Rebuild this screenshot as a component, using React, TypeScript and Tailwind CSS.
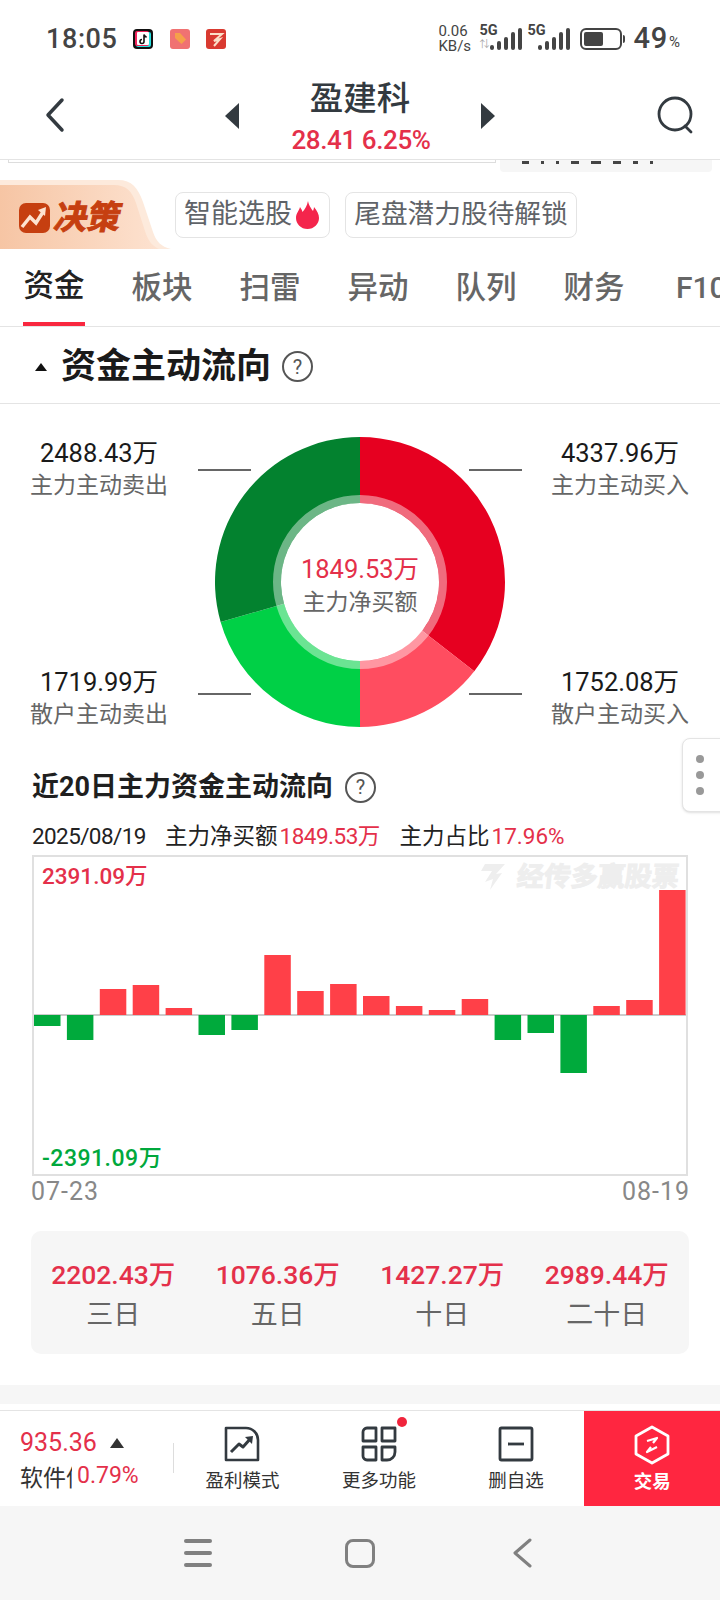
import React from 'react';

const polar = (r: number, deg: number) => {
    const a = ((deg - 90) * Math.PI) / 180;
    return [162 + r * Math.cos(a), 145 + r * Math.sin(a)];
};

const arc = (r0: number, r1: number, from: number, to: number) => {
    const [ax, ay] = polar(r1, from);
    const [bx, by] = polar(r1, to);
    const [cx, cy] = polar(r0, to);
    const [dx, dy] = polar(r0, from);
    const large = to - from > 180 ? 1 : 0;
    return `M${ax} ${ay}A${r1} ${r1} 0 ${large} 1 ${bx} ${by}L${cx} ${cy}A${r0} ${r0} 0 ${large} 0 ${dx} ${dy}Z`;
};

const slices = [
    { from: 0, to: 128, color: '#e60020' },
    { from: 128, to: 180, color: '#ff4d60' },
    { from: 180, to: 254, color: '#00d046' },
    { from: 254, to: 360, color: '#03822f' },
];

const bars = [-11, -25, 26, 30, 7, -20, -15, 60, 24, 31, 19, 9, 5, 16, -25, -18, -58, 9, 15, 125];

const tabs = ['资金', '板块', '扫雷', '异动', '队列', '财务'];

const periods = [
    { value: '2202.43万', label: '三日' },
    { value: '1076.36万', label: '五日' },
    { value: '1427.27万', label: '十日' },
    { value: '2989.44万', label: '二十日' },
];

const Signal: React.FC = () => (
    <svg width="34" height="24" viewBox="0 0 34 24" fill="#444">
        <rect x="1" y="18" width="4" height="5" rx="2" />
        <rect x="8" y="14" width="4" height="9" rx="2" />
        <rect x="15" y="10" width="4" height="13" rx="2" />
        <rect x="22" y="5" width="4" height="18" rx="2" />
        <rect x="29" y="1" width="4" height="22" rx="2" />
    </svg>
);

const Help: React.FC = () => (
    <span className="flex h-[31px] w-[31px] items-center justify-center rounded-full border-2 border-[#555] text-[20px] leading-none text-[#555]">?</span>
);

const Label: React.FC<{ value: string; label: string }> = ({ value, label }) => (
    <div className="flex flex-col items-center">
        <span className="h-[34px] text-[25.5px] leading-[34px] text-[#1a1a1a]">{value}</span>
        <span className="h-[32px] text-[23px] leading-[32px] text-[#666]">{label}</span>
    </div>
);

const BarItem: React.FC<{ label: string; icon: React.ReactNode; dot?: boolean }> = ({ label, icon, dot }) => (
    <div className="flex flex-col items-center pt-[15px]">
        <div className="relative">
            {icon}
            {dot && <span className="absolute right-[-10px] top-[-9px] h-[10px] w-[10px] rounded-full bg-[#f0243c]" />}
        </div>
        <span className="mt-[6px] text-[18.5px] leading-[26px] text-[#333]">{label}</span>
    </div>
);

export default function App() {
    return (
        <div className="relative flex h-[1600px] w-[720px] flex-col overflow-hidden bg-white [font-family:Roboto,'Noto_Sans_CJK_SC',sans-serif]">
            {/* status bar */}
            <div className="flex h-[78px] items-center justify-between pl-[46px] pr-[40px]">
                <div className="flex items-center">
                    <span className="w-[87px] text-[27px] font-medium tracking-[0.6px] text-[#444]">18:05</span>
                    <svg width="20" height="20" viewBox="0 0 20 20">
                        <rect width="20" height="20" rx="4" fill="#111" />
                        <rect x="3" y="3" width="15" height="15" rx="2" fill="#25e0e0" />
                        <rect x="2" y="2" width="14" height="15" rx="2" fill="#f0245c" />
                        <rect x="4" y="3" width="12" height="13" rx="1" fill="#fff" />
                        <path d="M11 5.500v7a2 2 0 1 1-2-2M11 5.500c.3 1.500 1.300 2.400 2.700 2.500" fill="none" stroke="#111" strokeWidth="1.600" />
                    </svg>
                    <svg className="ml-[17px]" width="20" height="20" viewBox="0 0 20 20">
                        <rect width="20" height="20" rx="3" fill="#f07272" />
                        <path d="M5 4h5l6 6.500-4.500 4.500L5 9z" fill="#f5a04a" />
                    </svg>
                    <svg className="ml-[16px]" width="20" height="20" viewBox="0 0 20 20">
                        <rect width="20" height="20" rx="3" fill="#d93a30" />
                        <path d="M4 5h12L8 12l6-2-6 7" fill="none" stroke="#fbe0c8" strokeWidth="2" />
                    </svg>
                </div>
                <div className="flex items-center text-[#444]">
                    <div className="flex w-[41px] flex-col text-[15px] leading-[15px]">
                        <span>0.06</span>
                        <span>KB/s</span>
                    </div>
                    <div className="relative h-[24px] w-[44px]">
                        <span className="absolute left-0 top-[-4px] text-[14.5px] font-bold leading-[16px]">5G</span>
                        <span className="absolute left-0 top-[13px] text-[10px] leading-[10px] text-[#aaa]">⇅</span>
                        <div className="absolute right-0 top-0"><Signal /></div>
                    </div>
                    <div className="relative ml-[4px] h-[24px] w-[44px]">
                        <span className="absolute left-0 top-[-4px] text-[14.5px] font-bold leading-[16px]">5G</span>
                        <div className="absolute right-0 top-0"><Signal /></div>
                    </div>
                    <div className="ml-[9px] flex h-[22px] w-[42px] items-center rounded-[6px] border-2 border-[#444] p-[2px]">
                        <div className="h-full w-[19px] rounded-[2px] bg-[#444]" />
                    </div>
                    <div className="ml-[1px] h-[8px] w-[2px] rounded-r bg-[#444]" />
                    <span className="ml-[8px] text-[29px] font-medium tracking-[0.8px]">49</span>
                    <span className="ml-[1px] mt-[6px] text-[15px]">%</span>
                </div>
            </div>

            {/* title */}
            <div className="grid h-[82px] grid-cols-[1fr_270px_1fr] items-center border-b border-[#e4e4e4]">
                <div className="pb-[8px] pl-[44px]">
                    <svg width="22" height="36" viewBox="0 0 22 36" fill="none" stroke="#333a40" strokeWidth="3.500" strokeLinecap="round" strokeLinejoin="round">
                        <path d="M18 3 4 18l14 15" />
                    </svg>
                </div>
                <div className="flex items-start justify-between">
                    <div className="mt-[20px] h-0 w-0 border-y-[13px] border-r-[14px] border-y-transparent border-r-[#333a40]" />
                    <div className="-mt-[3px] flex flex-col items-center">
                        <span className="text-[33.5px] font-medium leading-[38px] text-[#333a40]">盈建科</span>
                        <span className="ml-[2px] mt-[7px] text-[26px] font-medium leading-[30px] tracking-[-0.4px] text-[#e4304a]">28.41 6.25%</span>
                    </div>
                    <div className="mt-[20px] h-0 w-0 border-y-[13px] border-l-[14px] border-y-transparent border-l-[#333a40]" />
                </div>
                <div className="flex justify-end pb-[8px] pr-[23px]">
                    <svg width="42" height="40" viewBox="0 0 42 40" fill="none" stroke="#333a40" strokeWidth="2.800" strokeLinecap="round">
                        <circle cx="20" cy="19" r="16" />
                        <path d="m30 31 6 6" />
                    </svg>
                </div>
            </div>

            {/* clipped row */}
            <div className="flex h-[12px] items-start pl-[8px] pr-[8px]">
                <div className="h-[3px] w-[488px] border-x border-b border-[#ddd]" />
                <div className="ml-[4px] flex h-[12px] flex-1 items-start gap-[12px] rounded-b-[4px] bg-[#f6f6f6] pl-[22px] pt-[1px]">
                    {[7, 3, 3, 8, 10, 8, 5, 3].map((w, i) => (
                        <span key={i} className="h-[3px] bg-[#444]" style={{ width: w }} />
                    ))}
                </div>
            </div>

            {/* banner */}
            <div className="mt-[8px] flex h-[69px] items-center">
                <div className="relative h-[69px] w-[175px] shrink-0">
                    <svg className="absolute inset-0" width="175" height="69" viewBox="0 0 175 69">
                        <defs>
                            <linearGradient id="peach" x1="0" x2="1" y1="0" y2="0">
                                <stop offset="0" stopColor="#f6c5a4" />
                                <stop offset="1" stopColor="#fde2d0" />
                            </linearGradient>
                        </defs>
                        <path d="M0 0h118c14 0 20 8 25 22l10 30c3 9 8 15 18 17H0z" fill="#fdeadc" />
                        <path d="M0 5h114c12 0 18 6 22 18l9 28c3 9 6 14 14 18H0z" fill="url(#peach)" />
                    </svg>
                    <div className="absolute left-[19px] top-[23px] flex items-center gap-[5px]">
                        <svg width="31" height="30" viewBox="0 0 31 30">
                            <path d="M7 0h17a7 7 0 0 1 7 7v16a7 7 0 0 1-7 7H7a7 7 0 0 1-7-7V7a7 7 0 0 1 7-7z" fill="#c63f10" />
                            <path d="M3 24 11 14l6 6 7-11" fill="none" stroke="#fde2d0" strokeWidth="3.500" />
                            <path d="m19 7 8-3-1 9z" fill="#fde2d0" />
                        </svg>
                        <span className="-skew-x-12 text-[33px] font-bold leading-[30px] text-[#c63f10] [-webkit-text-stroke:1px_#c63f10]">决策</span>
                    </div>
                </div>
                <div className="flex h-[46px] w-[155px] items-center gap-[4px] rounded-[8px] border border-[#e4e4e4] pl-[8px] text-[27px] text-[#5f6368]">
                    <span>智能选股</span>
                    <svg width="23" height="28" viewBox="0 0 23 28" fill="#f4254c">
                        <path d="M12 0c1 5 3 7 5 10 .5-1.500 1-2.500 1-4 3 4 5 7 5 11 0 6-5 11-11.500 11S0 23 0 17c0-5 3-7 4-11 1 1.500 2 3 2.500 5C9 8 11 5 12 0z" />
                    </svg>
                </div>
                <div className="ml-[15px] flex h-[46px] w-[232px] items-center justify-center rounded-[8px] border border-[#e4e4e4] text-[26.7px] text-[#5f6368]">尾盘潜力股待解锁</div>
            </div>

            {/* tabs */}
            <div className="flex h-[78px] border-b border-[#e4e4e4] pl-[23px]">
                {tabs.map((t, i) => (
                    <div key={t} className={`flex h-[77px] w-[108px] shrink-0 items-start ${i === 0 ? 'text-[#222]' : 'text-[#666]'}`}>
                        <div className={`flex h-[77px] w-[62px] items-center justify-center text-[30.5px] font-medium ${i === 0 ? 'border-b-4 border-[#f9273f]' : ''}`}>{t}</div>
                    </div>
                ))}
                <div className="flex h-[77px] shrink-0 items-center pl-[5px] text-[30px] font-medium text-[#666]">F10</div>
            </div>

            {/* section title */}
            <div className="flex h-[77px] items-center border-b border-[#e4e4e4] pl-[35px] pt-[3px]">
                <div className="h-0 w-0 border-x-[6px] border-b-[8px] border-x-transparent border-b-[#111]" />
                <span className="ml-[14px] text-[35px] font-bold leading-none text-[#1a1a1a]">资金主动流向</span>
                <span className="ml-[11px]"><Help /></span>
            </div>

            {/* donut */}
            <div className="flex h-[327px] pt-[32px]">
                <div className="flex h-[295px] w-[198px] flex-col justify-between">
                    <Label value="2488.43万" label="主力主动卖出" />
                    <Label value="1719.99万" label="散户主动卖出" />
                </div>
                <div className="relative mt-px h-[290px] w-[324px]">
                    <svg width="324" height="290" viewBox="0 0 324 290">
                        {slices.map(s => (
                            <path key={s.from} d={arc(79, 145, s.from, s.to)} fill={s.color} />
                        ))}
                        <circle cx="162" cy="145" r="83" fill="none" stroke="#fff" strokeOpacity="0.42" strokeWidth="8" />
                        <path d="M-1 33h54M271 33h54M-1 257h54M271 257h54" stroke="#666" strokeWidth="1.800" />
                    </svg>
                    <div className="absolute inset-0 flex flex-col items-center justify-center pt-[8px]">
                        <span className="text-[25.5px] leading-[34px] text-[#e4304a]">1849.53万</span>
                        <span className="text-[23px] leading-[34px] text-[#666]">主力净买额</span>
                    </div>
                </div>
                <div className="-ml-px flex h-[295px] w-[198px] flex-col justify-between">
                    <Label value="4337.96万" label="主力主动买入" />
                    <Label value="1752.08万" label="散户主动买入" />
                </div>
            </div>

            {/* side handle */}
            <div className="absolute left-[682px] top-[738px] flex h-[74px] w-[42px] flex-col items-center justify-center gap-[8px] rounded-l-[8px] border border-[#e4e4e4] bg-white pr-[6px] shadow-sm">
                <span className="h-[8px] w-[8px] rounded-full bg-[#999]" />
                <span className="h-[8px] w-[8px] rounded-full bg-[#999]" />
                <span className="h-[8px] w-[8px] rounded-full bg-[#999]" />
            </div>

            {/* 20 day chart */}
            <div className="mt-[39px] flex h-[34px] items-center pl-[32px]">
                <span className="text-[27px] font-bold leading-none text-[#1f1f1f]">近20日主力资金主动流向</span>
                <span className="ml-[12px]"><Help /></span>
            </div>
            <div className="mt-[18px] flex h-[30px] items-center pl-[32px] text-[22.5px] text-[#222]">
                <span className="w-[133px] tracking-[-0.6px]">2025/08/19</span>
                <span>主力净买额</span>
                <span className="w-[122px] pl-[2px] tracking-[-0.5px] text-[#e4304a]">1849.53万</span>
                <span>主力占比</span>
                <span className="pl-[2px] text-[#e4304a]">17.96%</span>
            </div>
            <div className="relative ml-[32px] mt-[3px] h-[321px] w-[656px] border-2 border-[#e0e0e0]">
                <div className="absolute right-[7px] top-[2px] flex items-center gap-[12px] text-[#eeeeee]">
                    <svg width="28" height="30" viewBox="0 0 28 30" fill="currentColor">
                        <path d="M8 2h20l-9 10 6-1-12 17 3-11-8 3 7-11H4z" />
                    </svg>
                    <span className="-skew-x-6 text-[27px] font-bold leading-[36px] [-webkit-text-stroke:1px_#eeeeee]">经传多赢股票</span>
                </div>
                <svg className="relative block" width="652" height="317" viewBox="0 0 652 317">
                    <rect x="0" y="157" width="652" height="2" fill="#ccc" />
                    {bars.map((h, i) => (
                        <rect
                            key={i}
                            x={i * 32.9}
                            y={h > 0 ? 158 - h : 158}
                            width="26.5"
                            height={Math.abs(h)}
                            fill={h > 0 ? '#ff4048' : '#00aa3c'}
                        />
                    ))}
                </svg>
                <span className="absolute left-[8px] top-[4px] text-[22.5px] font-medium leading-[30px] text-[#e4304a]">2391.09万</span>
                <span className="absolute bottom-0 left-[8px] text-[23px] font-medium leading-[30px] tracking-[0.5px] text-[#00a83c]">-2391.09万</span>
            </div>
            <div className="ml-[31px] mt-[2px] flex h-[28px] w-[659px] items-center justify-between text-[25px] tracking-[1px] text-[#888]">
                <span>07-23</span>
                <span>08-19</span>
            </div>

            {/* period summary */}
            <div className="ml-[31px] mt-[25px] grid h-[123px] w-[658px] grid-cols-4 rounded-[10px] bg-[#f6f6f6] pt-[24px]">
                {periods.map(p => (
                    <div key={p.label} className="flex flex-col items-center">
                        <span className="h-[40px] text-[26.5px] font-medium leading-[40px] text-[#e4304a]">{p.value}</span>
                        <span className="text-[27px] leading-[40px] text-[#666]">{p.label}</span>
                    </div>
                ))}
            </div>

            <div className="mt-[31px] h-[19px] bg-[#f6f6f6]" />
            <div className="h-[7px] border-b border-[#e4e4e4]" />

            {/* bottom bar */}
            <div className="flex h-[95px]">
                <div className="w-[174px] pl-[20px] pt-[15px]">
                    <div className="flex h-[34px] items-center">
                        <span className="w-[90px] text-[25px] text-[#e4304a]">935.36</span>
                        <div className="h-0 w-0 border-x-[7px] border-b-[10px] border-x-transparent border-b-[#333]" />
                    </div>
                    <div className="mt-[2px] flex h-[34px] items-center">
                        <span className="w-[52px] overflow-hidden whitespace-nowrap text-[23px] text-[#333]">软件信息</span>
                        <span className="ml-[5px] pb-[5px] text-[23px] text-[#e4304a]">0.79%</span>
                    </div>
                </div>
                <div className="mt-[32px] h-[30px] w-px bg-[#ddd]" />
                <div className="grid flex-1 grid-cols-[136px_137px_137px]">
                    <BarItem
                        label="盈利模式"
                        icon={
                            <svg className="block" width="36" height="36" viewBox="0 0 36 36" fill="none" stroke="#333a40" strokeWidth="2.600" strokeLinejoin="round">
                                <path d="M2 2h20a12 12 0 0 1 12 12v20H2z" />
                                <path d="m7 26 8-8 4 3 8-9" strokeWidth="3" />
                                <path d="m21 11 8-1-1 8z" fill="#333a40" stroke="none" />
                            </svg>
                        }
                    />
                    <BarItem
                        label="更多功能"
                        dot
                        icon={
                            <svg className="block" width="36" height="36" viewBox="0 0 36 36" fill="none" stroke="#333a40" strokeWidth="2.800" strokeLinejoin="round">
                                <path d="M6 2h9v13H2V6a4 4 0 0 1 4-4zM21 2h13v13H21zM2 21h13v13H6a4 4 0 0 1-4-4zM21 21h13v5a8 8 0 0 1-8 8h-5z" />
                            </svg>
                        }
                    />
                    <BarItem
                        label="删自选"
                        icon={
                            <svg className="block" width="36" height="36" viewBox="0 0 36 36" fill="none" stroke="#333a40" strokeWidth="2.800" strokeLinejoin="round">
                                <rect x="2" y="2" width="32" height="32" rx="1.500" />
                                <path d="M10 18h16" />
                            </svg>
                        }
                    />
                </div>
                <div className="flex w-[136px] flex-col items-center bg-[#ff2640] pt-[14px]">
                    <svg width="36" height="40" viewBox="0 0 36 40" fill="none" stroke="#fff" strokeWidth="2.800" strokeLinejoin="round">
                        <path d="M18 2 34 11v18L18 38 2 29V11z" />
                        <path d="m13 16 10-3-4 5M23 22l-10 5 4-5" strokeWidth="2.200" />
                    </svg>
                    <span className="mt-[4px] text-[18.5px] font-bold leading-[26px] text-white">交易</span>
                </div>
            </div>

            {/* nav bar */}
            <div className="flex h-[94px] flex-1 items-center justify-center bg-[#f6f6f6] pr-[5px]">
                <div className="flex w-[28px] flex-col gap-[8px]">
                    <span className="h-[4px] rounded bg-[#808080]" />
                    <span className="h-[4px] rounded bg-[#808080]" />
                    <span className="h-[4px] rounded bg-[#808080]" />
                </div>
                <div className="ml-[133px] h-[29px] w-[30px] rounded-[8px] border-[3px] border-[#808080]" />
                <svg className="ml-[137px]" width="20" height="30" viewBox="0 0 20 30" fill="none" stroke="#808080" strokeWidth="3" strokeLinecap="round" strokeLinejoin="round">
                    <path d="M18 2 3 15l15 13" />
                </svg>
            </div>
        </div>
    );
}
